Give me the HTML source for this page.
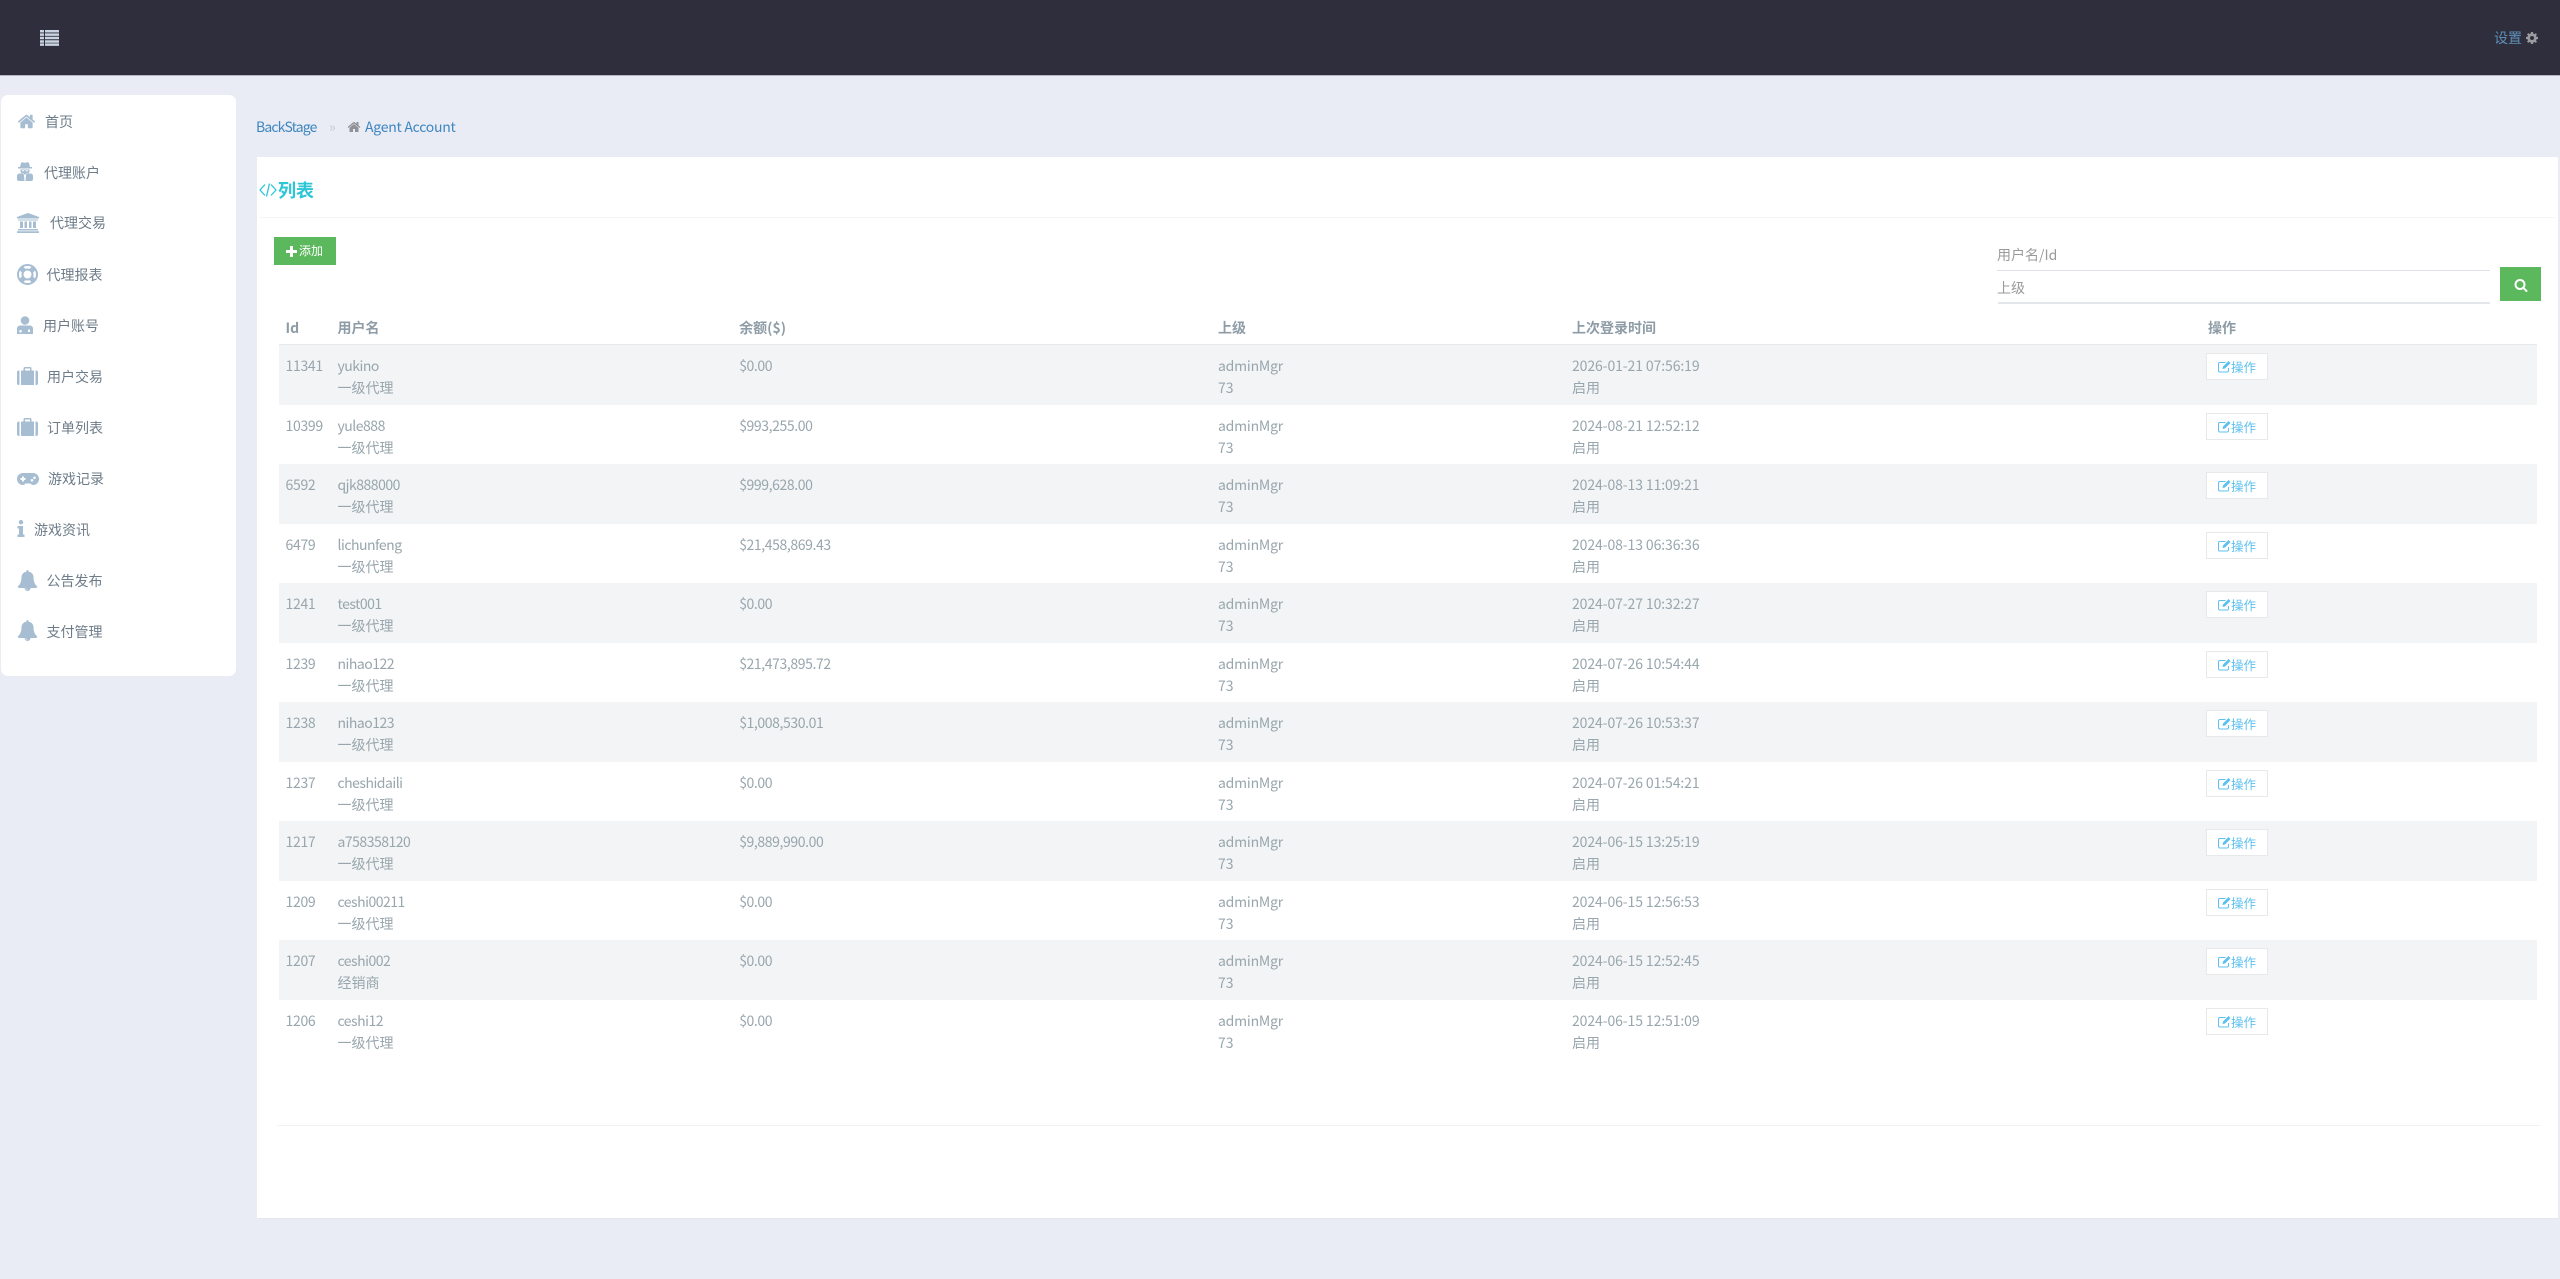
<!DOCTYPE html>
<html lang="zh">
<head>
<meta charset="utf-8">
<title>Agent Account</title>
<style>
*{box-sizing:border-box}
html,body{margin:0;padding:0;width:2560px;height:1279px;overflow:hidden;background:#e9ecf4;font-family:"Noto Sans CJK SC","Liberation Sans",sans-serif;font-size:14px}
.a{position:absolute;white-space:nowrap}
#top{position:absolute;left:0;top:0;width:2560px;height:76px;background:#2f2e3c;border-bottom:1px solid #b4b7c2}
#side{position:absolute;left:1px;top:95px;width:235px;height:581px;background:#fff;border-radius:7px}
#panel{position:absolute;left:257px;top:157px;width:2301px;height:1062px;background:#fff;border-bottom:1px solid #e4e7ee}
.m{position:absolute;color:#6d7c89;font-size:14px;line-height:20px;height:20px;white-space:nowrap}
svg.i{position:absolute;fill:#a6bdd2}
.h{position:absolute;top:318px;font-weight:700;color:#8d9ca6;line-height:20px;white-space:nowrap}
.r{position:absolute;left:279px;width:2258px;height:60px;color:#98a6ad;line-height:22px}
.r.o{background:#f2f4f6}
.r span{position:absolute;top:10px;white-space:nowrap}
.r span b{font-weight:400;letter-spacing:0}
.c1{left:6.5px;letter-spacing:-.3px}.c2{left:58.5px;letter-spacing:-.5px}.c3{left:460.2px;letter-spacing:-.4px}.c4{left:939px;letter-spacing:-.2px}.c5{left:1293px;letter-spacing:-.1px}
.b{position:absolute;left:1927px;top:8px;width:62px;height:27px;background:#fff;border:1px solid #e6e8ea;color:#5cc0f0;font-size:12.5px;line-height:25px;padding-left:24px}
.b svg{position:absolute;left:11px;top:6px;width:13px;height:13px;fill:#5cc0f0}
</style>
</head>
<body>
<svg width="0" height="0" style="position:absolute">
<defs>
<symbol id="home" viewBox="0 0 1792 1792"><path d="M1472 992v480q0 26-19 45t-45 19h-384v-384h-256v384h-384q-26 0-45-19t-19-45v-480q0-1 .5-3t.5-3l575-474 575 474q1 2 1 6zm223-69l-62 74q-8 9-21 11h-3q-13 0-21-7l-692-577-692 577q-12 8-24 7-13-2-21-11l-62-74q-8-10-7-23.500t11-21.500l719-599q32-26 76-26t76 26l244 204v-195q0-14 9-23t23-9h192q14 0 23 9t9 23v408l219 182q10 8 11 21.500t-7 23.500z"/></symbol>
<symbol id="bell" viewBox="0 0 1792 1792"><path d="M912 1696q0-16-16-16-59 0-101.500-42.500t-42.500-101.500q0-16-16-16t-16 16q0 73 51.500 124.500t124.500 51.500q16 0 16-16zm816-288q0 52-38 90t-90 38h-448q0 106-75 181t-181 75-181-75-75-181h-448q-52 0-90-38t-38-90q50-42 91-88t85-119.500 74.500-158.500 50-206 19.500-260q0-152 117-282.500t307-158.500q-8-19-8-39 0-40 28-68t68-28 68 28 28 68q0 20-8 39 190 28 307 158.500t117 282.500q0 139 19.500 260t50 206 74.500 158.500 85 119.500 91 88z"/></symbol>
<symbol id="case" viewBox="0 0 21 18"><path d="M0 5.500A2 2 0 0 1 2 3.500H2.500V18H2A2 2 0 0 1 0 16ZM4 3.500H6.500V1.500A1.500 1.500 0 0 1 8 0H13A1.500 1.500 0 0 1 14.500 1.500V3.500H17V18H4ZM8 3.500H13V1.500H8ZM18.500 3.500H19A2 2 0 0 1 21 5.500V16A2 2 0 0 1 19 18H18.500Z" fill-rule="evenodd"/></symbol>
<symbol id="edit" viewBox="0 0 13 13"><path d="M2 2H7.500V3H2A1 1 0 0 0 1 4V10.500A1 1 0 0 0 2 11.500H9A1 1 0 0 0 10 10.500V8H11V10.500A2 2 0 0 1 9 12.500H2A2 2 0 0 1 0 10.500V4A2 2 0 0 1 2 2Z"/><path d="M10.500 1L12.500 3L7 8.500L4.500 9L5 6.500Z"/></symbol>
</defs>
</svg>

<div id="top"></div>
<svg class="a" style="left:40px;top:30px" width="19" height="16" viewBox="0 0 19 16" fill="#c9d3e1"><path d="M0 0h4v2.500H0zM5 0h14v2.500H5zM0 3.400h4v2.500H0zM5 3.400h14v2.500H5zM0 6.800h4v2.500H0zM5 6.800h14v2.500H5zM0 10.200h4v2.500H0zM5 10.200h14v2.500H5zM0 13.400h4v2.500H0zM5 13.400h14v2.500H5z"/></svg>
<div class="a" style="left:2494px;top:28px;line-height:20px;font-size:14px;color:#5f8fb8">设置</div>
<svg class="a" style="left:2526px;top:32px" width="12" height="12" viewBox="0 0 12 12"><path fill="#9a9ba0" fill-rule="evenodd" d="M5 0h2l.3 1.600 1.100.5L9.800 1.200l1.100 1.100-.9 1.400.5 1.100L12 5v2l-1.500.3-.5 1.100.9 1.400-1.100 1.100-1.400-.9-1.100.5L7 12H5l-.3-1.500-1.100-.5-1.400.9-1.100-1.100.9-1.400-.5-1.100L0 7V5l1.500-.3.500-1.100-.9-1.400 1.100-1.100 1.400.9 1.100-.5zM6 4a2 2 0 1 0 0 4 2 2 0 0 0 0-4z"/></svg>

<div id="side"></div>
<svg class="i" style="left:17px;top:112px;width:19px;height:19px"><use href="#home"/></svg>
<div class="m" style="left:45px;top:112px">首页</div>
<svg class="i" style="left:17px;top:162px" width="16" height="19" viewBox="0 0 16 19"><path fill-rule="evenodd" d="M4 1Q4.500 0 5.500 .3Q8 1.200 10.500 .3Q11.500 0 12 1L13 5H15V6.500H1V5H3ZM3.500 7.500H12.500V9A4.500 3.500 0 0 1 3.500 9ZM5 8.200V9.200H7.300V8.200ZM8.700 8.200V9.200H11V8.200ZM2.500 11.500H6.800L7.500 19H2A2 2 0 0 1 0 17V14A2.500 2.500 0 0 1 2.500 11.500ZM9.200 11.500H13.500A2.500 2.500 0 0 1 16 14V17A2 2 0 0 1 14 19H8.500Z"/></svg>
<div class="m" style="left:44px;top:163px">代理账户</div>
<svg class="i" style="left:17px;top:213px" width="22" height="20" viewBox="0 0 22 20"><path d="M11 0L22 4V5.500H0V4ZM1 6.500H21V7.500H1ZM3 8.500H6V15H3ZM7.500 8.500H10V15H7.500ZM12 8.500H14.500V15H12ZM16 8.500H19V15H16ZM1 16H21V17.500H1ZM0 18.300H22V20H0Z"/></svg>
<div class="m" style="left:50px;top:213px">代理交易</div>
<svg class="a" style="left:17px;top:264px" width="21" height="21" viewBox="0 0 21 21" fill="none" stroke="#a6bdd2"><circle cx="10.500" cy="10.500" r="9.500" stroke-width="2"/><circle cx="10.500" cy="10.500" r="5" stroke-width="2"/><path d="M4 4L7 7M17 4L14 7M4 17L7 14M17 17L14 14" stroke-width="5"/></svg>
<div class="m" style="left:46.500px;top:265px">代理报表</div>
<svg class="i" style="left:17px;top:316px" width="16" height="18" viewBox="0 0 16 18"><circle cx="8" cy="4.500" r="4.300"/><path fill-rule="evenodd" d="M3 9.500H13A3 3 0 0 1 16 12.500V18H0V12.500A3 3 0 0 1 3 9.500ZM3.500 14a1.300 1.300 0 1 0 .01 0ZM11 13.500V16H13V13.500Z"/></svg>
<div class="m" style="left:43px;top:316px">用户账号</div>
<svg class="i" style="left:17px;top:367px;width:21px;height:18px"><use href="#case"/></svg>
<div class="m" style="left:47px;top:367px">用户交易</div>
<svg class="i" style="left:17px;top:418px;width:21px;height:18px"><use href="#case"/></svg>
<div class="m" style="left:47px;top:418px">订单列表</div>
<svg class="i" style="left:17px;top:473px" width="22" height="12" viewBox="0 0 22 12"><path fill-rule="evenodd" d="M6 0H16A6 6 0 0 1 16 12Q14.500 12 13.500 10.500H8.500Q7.500 12 6 12A6 6 0 0 1 6 0ZM5 3.500V5H3.500V7H5V8.500H7V7H8.500V5H7V3.500ZM15 6a1.300 1.300 0 1 0 .01 0ZM17.500 3.500a1.300 1.300 0 1 0 .01 0Z"/></svg>
<div class="m" style="left:48px;top:469px">游戏记录</div>
<svg class="i" style="left:17px;top:520px" width="8" height="17" viewBox="0 0 8 17"><circle cx="4" cy="2.200" r="2.200"/><path d="M0.500 6H6V14.500H7.500V17H0.500V14.500H2V8.500H0.500Z"/></svg>
<div class="m" style="left:34px;top:520px">游戏资讯</div>
<svg class="i" style="left:17px;top:570px;width:21px;height:21px"><use href="#bell"/></svg>
<div class="m" style="left:46.500px;top:571px">公告发布</div>
<svg class="i" style="left:17px;top:620px;width:21px;height:21px"><use href="#bell"/></svg>
<div class="m" style="left:46.500px;top:622px">支付管理</div>

<div class="a" style="left:256px;top:117px;line-height:20px;color:#3f86c0;letter-spacing:-.85px">BackStage</div>
<div class="a" style="left:329px;top:117px;line-height:20px;color:#c6ccd4">»</div>
<svg class="a" style="left:347px;top:120px;width:14px;height:14px;fill:#8f9296"><use href="#home"/></svg>
<div class="a" style="left:365px;top:117px;line-height:20px;color:#3f86c0;letter-spacing:-.25px">Agent Account</div>

<div id="panel"></div>
<div class="a" style="left:259px;top:217px;width:2297px;height:1px;background:#f6f6f6"></div>
<svg class="a" style="left:259px;top:183px" width="18" height="14" viewBox="0 0 18 14" fill="none" stroke="#2cc6d6" stroke-width="1.300"><path d="M6 1.500L1 7L6 12.500M12 1.500L17 7L12 12.500M10.500 0.500L7.500 13.500"/></svg>
<div class="a" style="left:278px;top:177px;font-size:18px;font-weight:700;line-height:26px;color:#2cc6d6">列表</div>

<div class="a" style="left:274px;top:237px;width:62px;height:28px;background:#5cb85c"></div>
<svg class="a" style="left:286px;top:246px;width:11px;height:11px;fill:#fff"><path d="M4 0H7V4H11V7H7V11H4V7H0V4H4Z"/></svg>
<div class="a" style="left:299px;top:242px;font-size:12px;line-height:18px;color:#fff">添加</div>

<div class="a" style="left:1997px;top:245px;line-height:20px;color:#9a9a9a">用户名/Id</div>
<div class="a" style="left:1997px;top:270px;width:493px;height:1px;background:#dde1e7"></div>
<div class="a" style="left:1997px;top:278px;line-height:20px;color:#9a9a9a">上级</div>
<div class="a" style="left:1998px;top:302px;width:492px;height:2px;background:#e3e6eb"></div>
<div class="a" style="left:2500px;top:267px;width:41px;height:34px;background:#5cb85c"></div>
<svg class="a" style="left:2514px;top:278px;width:14px;height:14px;fill:#fff" viewBox="0 0 1792 1792"><path d="M1216 832q0-185-131.500-316.500t-316.500-131.500-316.500 131.500-131.500 316.500 131.500 316.500 316.500 131.500 316.500-131.500 131.500-316.500zm512 832q0 52-38 90t-90 38q-54 0-90-38l-343-342q-179 124-399 124-143 0-273.500-55.500t-225-150-150-225-55.500-273.500 55.500-273.500 150-225 225-150 273.500-55.500 273.500 55.500 225 150 150 225 55.500 273.500q0 220-124 399l343 343q37 37 37 90z"/></svg>

<div class="h" style="left:285.500px">Id</div>
<div class="h" style="left:337.500px">用户名</div>
<div class="h" style="left:739.200px">余额($)</div>
<div class="h" style="left:1218px">上级</div>
<div class="h" style="left:1572px">上次登录时间</div>
<div class="h" style="left:2208px">操作</div>
<div class="a" style="left:279px;top:344px;width:2258px;height:1px;background:#e6e8ea"></div>

<div class="r o" style="top:345px"><span class="c1">11341</span><span class="c2">yukino<br><b>一级代理</b></span><span class="c3">$0.00</span><span class="c4">adminMgr<br><b>73</b></span><span class="c5">2026-01-21 07:56:19<br><b>启用</b></span><div class="b"><svg><use href="#edit"/></svg>操作</div></div>
<div class="r" style="top:404.500px"><span class="c1">10399</span><span class="c2">yule888<br><b>一级代理</b></span><span class="c3">$993,255.00</span><span class="c4">adminMgr<br><b>73</b></span><span class="c5">2024-08-21 12:52:12<br><b>启用</b></span><div class="b"><svg><use href="#edit"/></svg>操作</div></div>
<div class="r o" style="top:464px"><span class="c1">6592</span><span class="c2">qjk888000<br><b>一级代理</b></span><span class="c3">$999,628.00</span><span class="c4">adminMgr<br><b>73</b></span><span class="c5">2024-08-13 11:09:21<br><b>启用</b></span><div class="b"><svg><use href="#edit"/></svg>操作</div></div>
<div class="r" style="top:523.500px"><span class="c1">6479</span><span class="c2">lichunfeng<br><b>一级代理</b></span><span class="c3">$21,458,869.43</span><span class="c4">adminMgr<br><b>73</b></span><span class="c5">2024-08-13 06:36:36<br><b>启用</b></span><div class="b"><svg><use href="#edit"/></svg>操作</div></div>
<div class="r o" style="top:583px"><span class="c1">1241</span><span class="c2">test001<br><b>一级代理</b></span><span class="c3">$0.00</span><span class="c4">adminMgr<br><b>73</b></span><span class="c5">2024-07-27 10:32:27<br><b>启用</b></span><div class="b"><svg><use href="#edit"/></svg>操作</div></div>
<div class="r" style="top:642.500px"><span class="c1">1239</span><span class="c2">nihao122<br><b>一级代理</b></span><span class="c3">$21,473,895.72</span><span class="c4">adminMgr<br><b>73</b></span><span class="c5">2024-07-26 10:54:44<br><b>启用</b></span><div class="b"><svg><use href="#edit"/></svg>操作</div></div>
<div class="r o" style="top:702px"><span class="c1">1238</span><span class="c2">nihao123<br><b>一级代理</b></span><span class="c3">$1,008,530.01</span><span class="c4">adminMgr<br><b>73</b></span><span class="c5">2024-07-26 10:53:37<br><b>启用</b></span><div class="b"><svg><use href="#edit"/></svg>操作</div></div>
<div class="r" style="top:761.500px"><span class="c1">1237</span><span class="c2">cheshidaili<br><b>一级代理</b></span><span class="c3">$0.00</span><span class="c4">adminMgr<br><b>73</b></span><span class="c5">2024-07-26 01:54:21<br><b>启用</b></span><div class="b"><svg><use href="#edit"/></svg>操作</div></div>
<div class="r o" style="top:821px"><span class="c1">1217</span><span class="c2">a758358120<br><b>一级代理</b></span><span class="c3">$9,889,990.00</span><span class="c4">adminMgr<br><b>73</b></span><span class="c5">2024-06-15 13:25:19<br><b>启用</b></span><div class="b"><svg><use href="#edit"/></svg>操作</div></div>
<div class="r" style="top:880.500px"><span class="c1">1209</span><span class="c2">ceshi00211<br><b>一级代理</b></span><span class="c3">$0.00</span><span class="c4">adminMgr<br><b>73</b></span><span class="c5">2024-06-15 12:56:53<br><b>启用</b></span><div class="b"><svg><use href="#edit"/></svg>操作</div></div>
<div class="r o" style="top:940px"><span class="c1">1207</span><span class="c2">ceshi002<br><b>经销商</b></span><span class="c3">$0.00</span><span class="c4">adminMgr<br><b>73</b></span><span class="c5">2024-06-15 12:52:45<br><b>启用</b></span><div class="b"><svg><use href="#edit"/></svg>操作</div></div>
<div class="r" style="top:999.500px"><span class="c1">1206</span><span class="c2">ceshi12<br><b>一级代理</b></span><span class="c3">$0.00</span><span class="c4">adminMgr<br><b>73</b></span><span class="c5">2024-06-15 12:51:09<br><b>启用</b></span><div class="b"><svg><use href="#edit"/></svg>操作</div></div>

<div class="a" style="left:277px;top:1125px;width:2263px;height:1px;background:#f0f1f3"></div>
</body>
</html>
